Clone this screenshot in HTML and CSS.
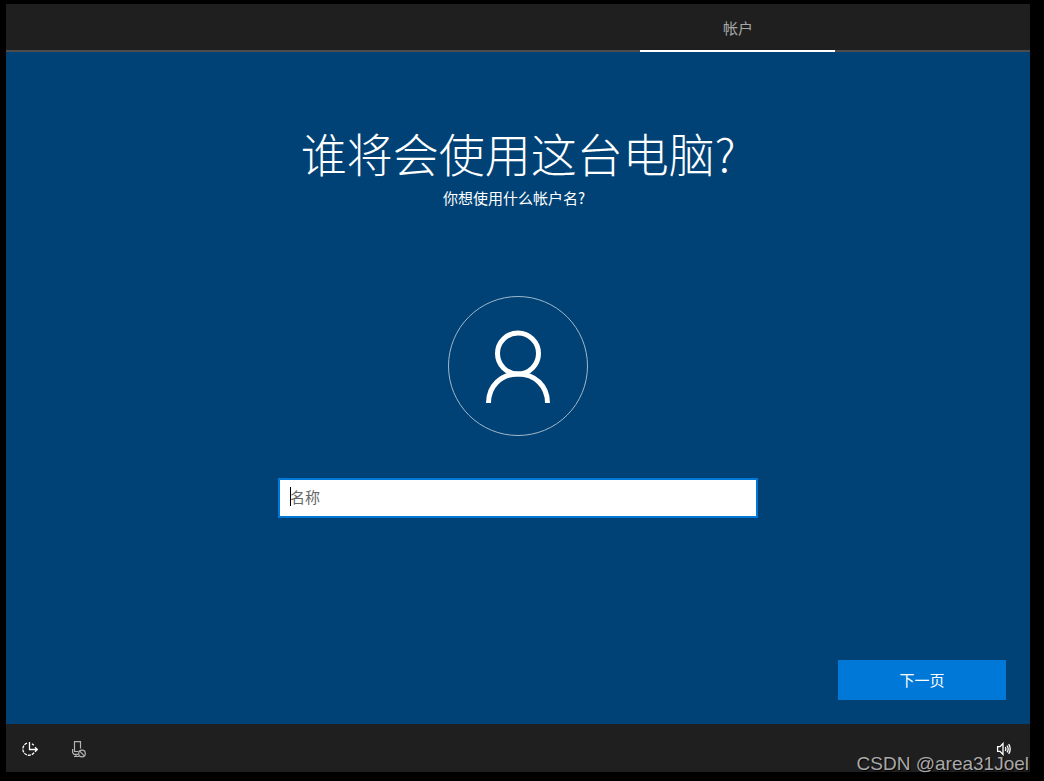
FILE: index.html
```html
<!DOCTYPE html>
<html lang="zh-CN">
<head>
<meta charset="utf-8">
<meta name="viewport" content="width=device-width, initial-scale=1">
<title>帐户</title>
<link rel="stylesheet" href="styles.css">
</head>
<body>
<div class="setup">
  <header class="topbar">
    <nav class="tabs">
      <a class="tab" href="#account" aria-current="step">帐户</a>
    </nav>
  </header>
  <main class="page" id="account">
    <h1 class="title">谁将会使用这台电脑?</h1>
    <label class="subtitle" for="name">你想使用什么帐户名?</label>
    <div class="avatar">
      <svg class="avatar-icon" viewBox="0 0 66 74" fill="none" stroke="#fff" stroke-width="5" aria-hidden="true">
        <circle cx="33" cy="24.500" r="20.500"/>
        <path d="M3.500 74C3.500 57 16 45 33 45S62.500 57 62.500 74"/>
      </svg>
    </div>
    <div class="field">
      <input class="name-input" id="name" type="text" placeholder="名称" autocomplete="off">
      <span class="caret"></span>
    </div>
    <button class="next" type="button">下一页</button>
  </main>
  <footer class="bottombar">
    <button class="tool" type="button" aria-label="轻松使用">
      <svg width="18" height="16" viewBox="0 0 18 16" fill="none" stroke="#fff" stroke-width="1.300" aria-hidden="true">
        <path d="M8.500 1v7.500H16M14 6.200l2.300 2.300L14 10.800"/>
        <path d="M6 2.200A6.200 6.200 0 1 0 13.200 11.500" stroke-dasharray="3 1"/>
        <path d="M11 2.700l1.800 1.500"/>
      </svg>
    </button>
    <button class="tool" type="button" aria-label="麦克风已关闭">
      <svg width="16" height="18" viewBox="0 0 16 18" fill="none" stroke="#b4b4b4" stroke-width="1.200" aria-hidden="true">
        <path d="M8.500 11.500H4.500V1.600H10.500V8.500"/>
        <path d="M2.600 9v3.500L4 14.300H8M6 14.300v2.200M4 16.500H9"/>
        <circle cx="12" cy="13.500" r="3.300"/>
        <path d="M9.700 11.200l4.600 4.600"/>
      </svg>
    </button>
    <button class="tool tool-end" type="button" aria-label="音量">
      <svg width="16" height="14" viewBox="0 0 16 14" fill="none" stroke="#fff" stroke-width="1.300" aria-hidden="true">
        <path d="M1.600 4.600H4L7 1.500v11L4 9.400H1.600z"/>
        <path d="M9.200 5q1.400 2 0 4M11 3.600q2.400 3.400 0 6.800M12.700 2.200q3 4.800 0 9.600"/>
      </svg>
    </button>
  </footer>
  <div class="watermark">CSDN @area31Joel</div>
</div>
</body>
</html>
```
FILE: styles.css
```css
* { box-sizing: border-box; }

body {
  margin: 0;
  min-height: 100vh;
  padding: 4px 14px 9px 6px;
  display: flex;
  background: #000;
  color: #fff;
  font: 15px/20px "Noto Sans CJK SC", sans-serif;
}

button, input { font: inherit; border-radius: 0; }

.setup {
  position: relative;
  flex: 1;
  display: flex;
  flex-direction: column;
}

.topbar {
  height: 48px;
  background: #1f1f1f;
  border-bottom: 2px solid #4c4c4c;
}

.tabs {
  display: flex;
  justify-content: flex-end;
  padding-right: 19%;
}

.tab {
  width: 195px;
  height: 48px;
  padding-top: 14px;
  border-bottom: 2px solid #fff;
  color: #a6a6a6;
  text-align: center;
  text-decoration: none;
}

.page {
  flex: 1;
  display: flex;
  flex-direction: column;
  align-items: center;
  padding: 68px 24px 24px;
  background: #004275;
}

.title {
  margin: 0 0 4px;
  font-size: 46px;
  line-height: 64px;
  font-weight: 300;
}

.subtitle {
  padding-right: 8px;
  line-height: 20px;
}

.avatar {
  width: 140px;
  height: 140px;
  margin-top: 88px;
  display: grid;
  place-items: center;
  border: 1px solid #a0b8cc;
  border-radius: 50%;
}

.avatar-icon { width: 66px; height: 74px; }

.field {
  position: relative;
  width: 100%;
  max-width: 480px;
  margin-top: 42px;
}

.name-input {
  display: block;
  width: 100%;
  height: 40px;
  padding: 0 10px 4px;
  border: 2px solid #0078d7;
  background: #fff;
  color: #000;
  outline: 0;
}

.name-input::placeholder { color: #666; opacity: 1; }

.caret {
  position: absolute;
  left: 12px;
  top: 9px;
  width: 1px;
  height: 19px;
  background: #000;
}

.next {
  width: 168px;
  height: 40px;
  margin-top: auto;
  align-self: flex-end;
  border: 0;
  background: #0078d7;
  color: #fff;
}

.bottombar {
  height: 48px;
  display: flex;
  align-items: center;
  background: #1f1f1f;
}

.tool {
  width: 48px;
  height: 48px;
  padding: 2px 0 0;
  display: grid;
  place-items: center;
  border: 0;
  background: none;
}

.tool-end {
  margin-left: auto;
  margin-right: 2px;
}

.watermark {
  position: absolute;
  right: 1px;
  bottom: -4px;
  color: #a9a9a9;
  font: 19px/24px "Liberation Sans", Arial, sans-serif;
  text-shadow: 1px 1px 1px #000;
}
```
